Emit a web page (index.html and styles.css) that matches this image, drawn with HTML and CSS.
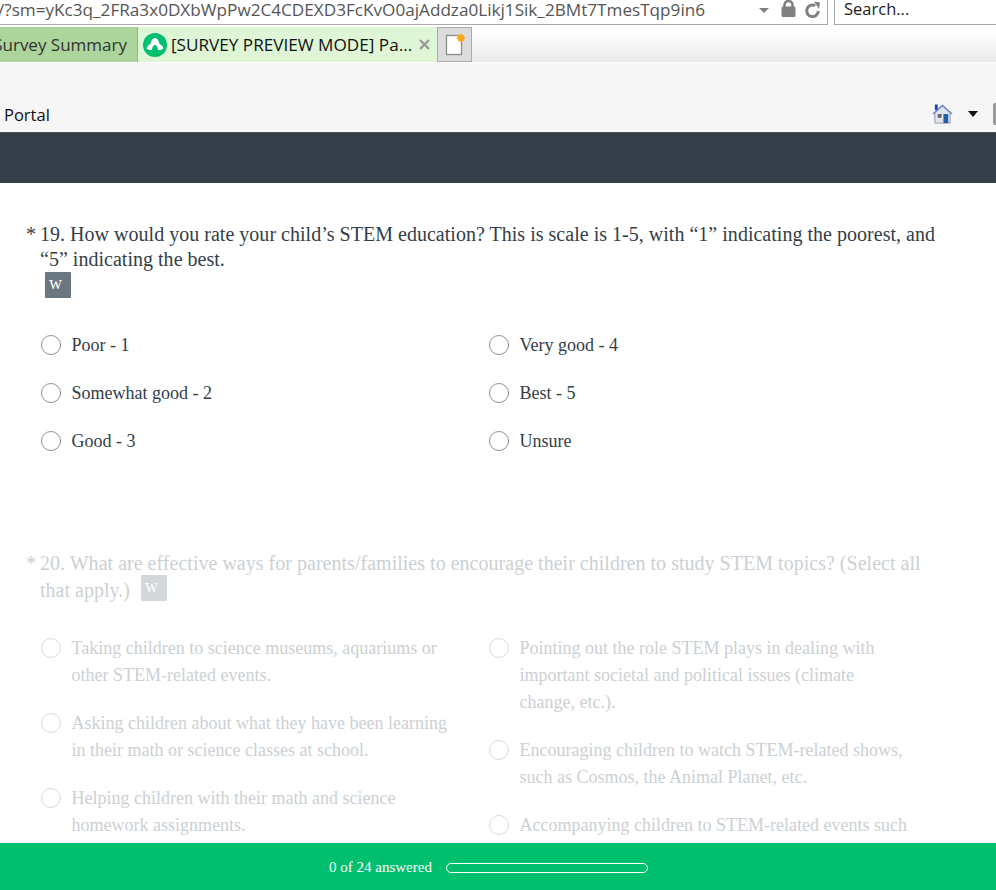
FILE: index.html
```html
<!DOCTYPE html>
<html lang="en">
<head>
<meta charset="utf-8">
<title>Survey preview</title>
<link rel="stylesheet" href="styles.css">
</head>
<body>
<div class="chrome">
  <div class="urlrow">
    <div class="urlbar">
      <span class="url">/?sm=yKc3q_2FRa3x0DXbWpPw2C4CDEXD3FcKvO0ajAddza0Likj1Sik_2BMt7TmesTqp9in6</span>
      <span class="dropcaret"></span>
      <svg class="lock" width="15" height="19" viewBox="0 0 15 19"><path d="M3.500 8V5a4 4 0 0 1 8 0V8" fill="none" stroke="#808080" stroke-width="2.600"/><rect x="0.500" y="6.500" width="14" height="10.500" rx="1.500" fill="#808080"/></svg>
      <svg class="reload" width="17" height="19" viewBox="0 0 17 19"><path d="M14.300 10a5.800 5.800 0 1 1-3-5.300" fill="none" stroke="#808080" stroke-width="3"/><path d="M10 0.500 L16 1.500 L15 8 Z" fill="#808080"/></svg>
    </div>
    <div class="searchbar">Search...</div>
  </div>
  <div class="tabrow">
    <div class="tab tab-inactive">Survey Summary</div>
    <div class="tab tab-active">
      <svg class="favicon" width="24" height="24" viewBox="0 0 24 24"><circle cx="12" cy="12" r="12" fill="#00bf6f"/><path d="M3.500 15.500C4.500 12.500 6.500 11.500 7.500 11 8 7.500 10 5 12 5s4 2.500 4.500 6c1 .5 3 1.500 4 4.500-1.500 1-3 1.500-4.500 1.500H15C15 14 13.500 12 12 12S9 14 9 17H8C6.500 17 5 16.500 3.500 15.500z" fill="#fff"/></svg>
      <span class="tabtitle">[SURVEY PREVIEW MODE] Pa...</span>
      <svg class="tabclose" width="11" height="11" viewBox="0 0 11 11"><path d="M1 1l9 9M10 1l-9 9" stroke="#999" stroke-width="2.400"/></svg>
    </div>
    <div class="tab tab-new">
      <svg width="24" height="24" viewBox="0 0 24 24"><rect x="3.500" y="2.500" width="15" height="19" fill="#fff" stroke="#8c8c8c" stroke-width="1.300"/><circle cx="18" cy="5" r="3.500" fill="#f7a81b"/><path d="M18 0.500v9M13.500 5h9M15 2l6 6M21 2l-6 6" stroke="#f7a81b"/></svg>
    </div>
  </div>
  <div class="bookmarks">
    <span class="portal">Portal</span>
    <div class="tools">
      <svg class="home" width="21" height="22" viewBox="0 0 22 22"><path d="M3 1h3v6H3z" fill="#2a3fb0"/><path d="M3 10 11 2l8 8v10H3z" fill="#dfe3ea"/><path d="M1 11 11 2l10 9" fill="none" stroke="#5b7fc7" stroke-width="1.500"/><path d="M3 10v10.500h16V10" fill="none" stroke="#8c97a8"/><rect x="6" y="11" width="4" height="4" fill="#666"/><rect x="12" y="11" width="5" height="9.500" fill="#1f5fa8"/></svg>
      <span class="toolcaret"></span>
      <span class="toolbox"></span>
    </div>
  </div>
</div>
<div class="darkbar"></div>
<main class="survey">
  <section class="q q19">
    <h2 class="qtitle"><span class="star">*</span><span class="qtext">19. How would you rate your child’s STEM education? This is scale is 1-5, with “1” indicating the poorest, and “5” indicating the best.<span class="wbox wbox-block">w</span></span></h2>
    <div class="answers short">
      <div class="col">
        <label class="opt"><i class="radio"></i><span>Poor - 1</span></label>
        <label class="opt"><i class="radio"></i><span>Somewhat good - 2</span></label>
        <label class="opt"><i class="radio"></i><span>Good - 3</span></label>
      </div>
      <div class="col">
        <label class="opt"><i class="radio"></i><span>Very good - 4</span></label>
        <label class="opt"><i class="radio"></i><span>Best - 5</span></label>
        <label class="opt"><i class="radio"></i><span>Unsure</span></label>
      </div>
    </div>
  </section>
  <section class="q q20">
    <h2 class="qtitle"><span class="star">*</span><span class="qtext">20. What are effective ways for parents/families to encourage their children to study STEM topics? (Select all that apply.) <span class="wbox">w</span></span></h2>
    <div class="answers long">
      <div class="col">
        <label class="opt"><i class="radio"></i><span>Taking children to science museums, aquariums or other STEM-related events.</span></label>
        <label class="opt"><i class="radio"></i><span>Asking children about what they have been learning in their math or science classes at school.</span></label>
        <label class="opt"><i class="radio"></i><span>Helping children with their math and science homework assignments.</span></label>
      </div>
      <div class="col">
        <label class="opt"><i class="radio"></i><span>Pointing out the role STEM plays in dealing with important societal and political issues (climate change, etc.).</span></label>
        <label class="opt"><i class="radio"></i><span>Encouraging children to watch STEM-related shows, such as Cosmos, the Animal Planet, etc.</span></label>
        <label class="opt"><i class="radio"></i><span>Accompanying children to STEM-related events such</span></label>
      </div>
    </div>
  </section>
</main>
<footer class="progress">
  <span class="progress-label">0 of 24 answered</span>
  <span class="progress-track"></span>
</footer>
</body>
</html>
```
FILE: styles.css
```css
* { box-sizing: border-box; }
html, body { margin: 0; height: 890px; overflow: hidden; background: #fff; }
body { position: relative; font-family: "Liberation Serif", serif; color: #333e48; width: 996px; }

.chrome { font-family: "Open Sans", "Noto Sans", sans-serif; }
.urlrow { display: flex; height: 25px; background: #fff; }
.urlbar { width: 828px; height: 25px; border: solid #aaa; border-width: 0 1px 1px 0; display: flex; align-items: center; overflow: hidden; position: relative; }
.url { font-size: 17.150px; color: #555; white-space: nowrap; margin-left: -2px; width: 755px; flex: none; overflow: hidden; line-height: 20px; margin-top: -4px; }
.dropcaret { flex: none; width: 0; height: 0; border: 5px solid transparent; border-top: 5px solid #808080; border-bottom: 0; margin-left: 6px; margin-top: -4px; }
.lock { flex: none; margin-left: 12px; margin-top: -5px; }
.reload { flex: none; margin-left: 8px; margin-top: -4px; }
.searchbar { margin-left: 6px; flex: 1; height: 25px; border: solid #aaa; border-width: 0 0 1px 1px; font-size: 16.500px; color: #222; padding-left: 9px; line-height: 18px; }

.tabrow { display: flex; height: 37px; padding-top: 2px; background: linear-gradient(#fff 0%, #fff 15%, #e9e9e9 100%); align-items: stretch; }
.tab { height: 35px; display: flex; align-items: center; font-size: 17px; white-space: nowrap; }
.tab-inactive { width: 138px; background: #acd59b; color: #333; border-right: 1px solid #9aa; justify-content: flex-end; padding-right: 10px; overflow: hidden; }
.tab-active { width: 299px; background: #dff6d6; color: #111; padding-left: 5px; }
.favicon { flex: none; }
.tabtitle { margin-left: 4px; font-size: 17.150px; }
.tabclose { flex: none; margin-left: 7px; }
.tab-new { width: 35px; background: #dcdcdc; border: 1px solid #aaa; justify-content: center; }

.bookmarks { height: 70px; background: #f6f6f6; display: flex; align-items: flex-end; justify-content: space-between; border-top: 1px solid #fff; }
.portal { font-size: 16.500px; color: #111; padding: 0 0 6px 4px; }
.tools { display: flex; align-items: center; padding-bottom: 7px; }
.home { flex: none; margin-right: 15px; }
.toolcaret { width: 0; height: 0; border: 5.500px solid transparent; border-top: 6px solid #111; border-bottom: 0; margin-right: 15px; }
.toolbox { width: 3px; height: 22px; background: #999; border-radius: 2px 0 0 2px; }

.darkbar { height: 51px; background: #333e48; border-top: 1px solid #555; }

.q { padding-left: 26px; }
.q19 { padding-top: 39px; }
.q20 { padding-top: 71px; color: #ccd0d4; }
.qtitle { margin: 0; font-size: 20px; font-weight: 400; line-height: 25px; letter-spacing: 0.020px; display: flex; width: 920px; }
.star { width: 14px; flex: none; }
.q20 .qtitle { line-height: 27px; }
.wbox { display: inline-block; width: 26px; height: 26px; background: #6b7780; color: #fff; font-size: 18px; line-height: 22px; padding-left: 4px; border-radius: 1px; }
.wbox-block { display: block; margin-left: 5px; }
.q20 .wbox { background: #d3d7da; margin-left: 6px; margin-top: -3px; vertical-align: 5px; }

.answers { display: flex; padding-left: 15px; }
.col { width: 448px; flex: none; }
.opt { display: flex; align-items: flex-start; font-size: 18px; }
.radio { flex: none; width: 20px; height: 20px; border: 1px solid #8a9299; border-radius: 50%; margin-right: 10.500px; background: #fff; }
.short { margin-top: 37px; }
.short .opt { height: 48px; line-height: 20px; }
.long { margin-top: 31px; }
.long .opt { line-height: 27px; margin-bottom: 21px; padding-right: 28px; }
.long .radio { border-color: #d8dbde; margin-top: 3px; }

.progress { position: absolute; left: 0; right: 0; bottom: 0; height: 47px; background: #00bf6f; color: #fff; display: flex; align-items: center; padding-left: 329px; font-size: 15px; padding-top: 1px; }
.progress-track { width: 202px; height: 10px; border: 1px solid #fff; border-radius: 5px; margin-left: 14px; margin-top: 1px; }
```
